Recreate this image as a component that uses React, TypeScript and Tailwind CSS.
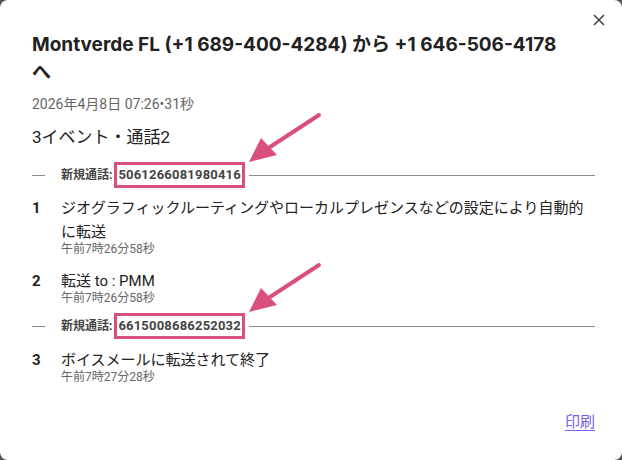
import React from 'react';

const font = { fontFamily: "Roboto, 'Noto Sans CJK JP', sans-serif" };

const events = [
  { n: 1, text: 'ジオグラフィックルーティングやローカルプレゼンスなどの設定により自動的に転送', time: '午前7時26分58秒' },
  { n: 2, text: '転送 to : PMM', time: '午前7時26分58秒' },
];

// callout arrow used for the annotations
const Arrow = ({ top }: { top: number }) => (
  <svg
    className="absolute left-[240px] w-[90px] h-[60px] pointer-events-none"
    style={{ top }}
    viewBox="0 0 90 60"
  >
    <line x1="79" y1="6" x2="30" y2="38" stroke="#d94f80" strokeWidth="4" strokeLinecap="round" />
    <polygon points="9,53 21,29 37,46" fill="#d94f80" />
  </svg>
);

const Divider = ({ id }: { id: string }) => (
  <div className="flex items-center h-[26px]">
    <div className="w-[13px] h-px bg-[#8a8a8a]" />
    <span className="ml-4 text-[12px] font-bold text-[#444]">新規通話:</span>
    <span className="ml-[2px] border-[3px] border-[#d94f80] px-[1px] h-[26px] flex items-center text-[13px] font-bold text-[#444] tracking-[0.2px]">
      {id}
    </span>
    <div className="flex-1 ml-[4px] h-px bg-[#8a8a8a]" />
  </div>
);

const Item = ({ n, text, time }: { n: number; text: string; time: string }) => (
  <div className="flex">
    <div className="w-[29px] shrink-0 text-[15px] font-bold text-[#222] leading-[24px]">{n}</div>
    <div className="flex-1">
      <div className="text-[15px] text-[#222] leading-[24px]">{text}</div>
      <div className="-mt-[2px] text-[12px] text-[#666] leading-[14px]">{time}</div>
    </div>
  </div>
);

export default function App() {
  return (
    <div className="w-[622px] h-[460px] bg-[#555]" style={font}>
      <div className="relative w-full h-full bg-white rounded-[8px] pl-8 pr-[27px] pt-[31px] flex flex-col">
        <button className="absolute right-[16px] top-[13px] w-[14px] h-[14px] text-[#444]">
          <svg viewBox="0 0 14 14" className="w-[14px] h-[14px]">
            <path d="M2 2L12 12M12 2L2 12" stroke="currentColor" strokeWidth="1.6" />
          </svg>
        </button>

        <h1
          className="text-[19px] font-bold text-[#222] leading-[28px] pr-[22px]"
          style={{ fontFamily: "Inter, 'Noto Sans CJK JP', sans-serif" }}
        >
          Montverde FL (+1 689-400-4284) から +1 646-506-4178 へ
        </h1>
        <div className="mt-[7px] text-[14px] text-[#666] leading-[20px]">2026年4月8日 07:26•31秒</div>
        <div className="mt-[11px] text-[17px] text-[#222] leading-[24px]">3イベント・通話2</div>

        <div className="mt-[13px]">
          <Divider id="5061266081980416" />
        </div>
        <div className="mt-[8px] flex flex-col gap-[13px]">
          {events.map((e) => (
            <Item key={e.n} {...e} />
          ))}
        </div>
        <div className="mt-[8px]">
          <Divider id="6615008686252032" />
        </div>
        <div className="mt-[9px]">
          <Item n={3} text="ボイスメールに転送されて終了" time="午前7時27分28秒" />
        </div>

        <div className="mt-[27px] flex justify-end">
          <a href="#" className="text-[15px] leading-[22px] text-[#7b5cf0] underline underline-offset-[3px]">印刷</a>
        </div>

        <Arrow top={109} />
        <Arrow top={259} />
      </div>
    </div>
  );
}
